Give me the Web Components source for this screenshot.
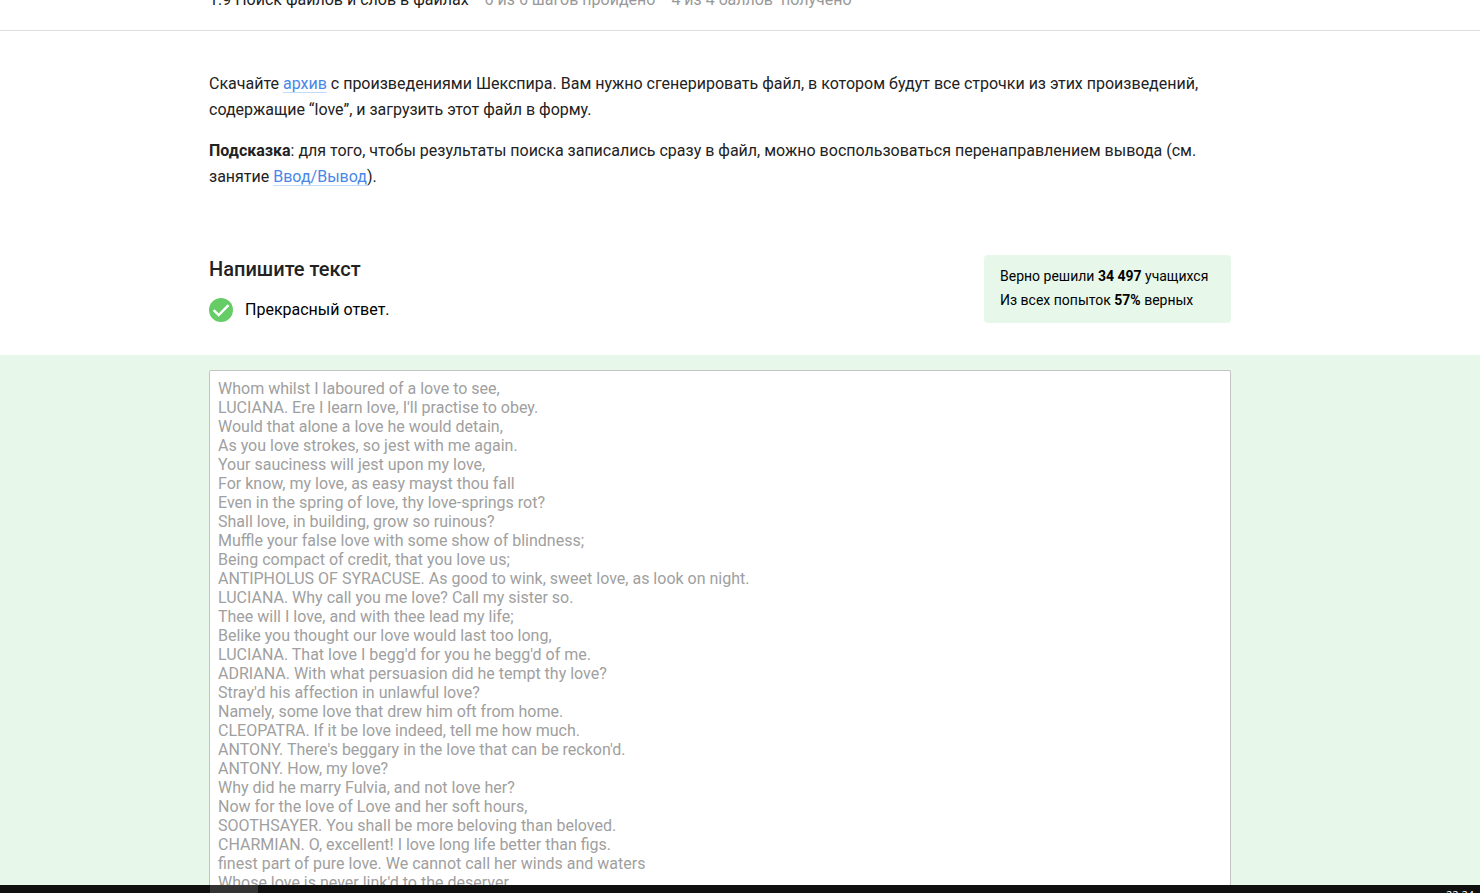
<!DOCTYPE html>
<html lang="ru">
<head>
<meta charset="utf-8">
<title>Поиск файлов и слов в файлах</title>
<style>
  html, body { margin: 0; height: 100%; }
  body { font: 16px/26px Roboto, "Noto Sans", sans-serif; color: #222; background: #fff; overflow: hidden; }
</style>
</head>
<body>
<lesson-page></lesson-page>

<template id="lesson-page">
  <style>
    :host { display: flex; flex-direction: column; height: 100vh; overflow: hidden; --gutter: 40px; --column: 1022px; --mint: #e7f8ea; }
    main { flex: 1; min-height: 0; display: flex; flex-direction: column; }
    a { color: #4a86e8; text-decoration: underline 1px #c2dcf8; text-underline-offset: 3px; text-decoration-skip-ink: none; }
    p { margin: 0; }
    .statement { display: flex; flex-direction: column; gap: 15px; padding: 40px 0 65px; }
    .summary { display: flex; justify-content: space-between; align-items: flex-start; padding-bottom: 31px; }
    h2 { margin: 0; font-size: 20px; line-height: 28px; font-weight: 500; }
    .verdict { display: flex; flex-direction: column; gap: 14px; }
  </style>
  <lesson-header>
    <span slot="title">1.9 Поиск файлов и слов в файлах</span>
    <span slot="progress">6 из 6 шагов пройдено</span>
    <span slot="progress">4 из 4 баллов&nbsp; получено</span>
  </lesson-header>
  <main>
    <page-column>
      <div class="statement">
        <p>Скачайте <a href="#archive">архив</a> с произведениями Шекспира. Вам нужно сгенерировать файл, в котором будут все строчки из этих произведений, содержащие “love”, и загрузить этот файл в форму.</p>
        <p><b>Подсказка</b>: для того, чтобы результаты поиска записались сразу в файл, можно воспользоваться перенаправлением вывода (см. занятие <a href="#io">Ввод/Вывод</a>).</p>
      </div>
      <div class="summary">
        <div class="verdict">
          <h2>Напишите текст</h2>
          <answer-status>Прекрасный ответ.</answer-status>
        </div>
        <solve-stats>
          <div>Верно решили <b>34 497</b> учащихся</div>
          <div>Из всех попыток <b>57%</b> верных</div>
        </solve-stats>
      </div>
    </page-column>
    <answer-area></answer-area>
  </main>
  <task-bar></task-bar>
</template>

<template id="page-column">
  <style>
    :host { display: block; padding-right: var(--gutter); }
    div { max-width: var(--column); margin: 0 auto; }
  </style>
  <div><slot></slot></div>
</template>

<template id="lesson-header">
  <style>
    :host { display: block; flex: none; margin-top: -31px; border-bottom: 1px solid #ddd; }
    .row { display: flex; gap: 16px; padding: 18px 0 17px; }
    ::slotted([slot=progress]) { color: #999; }
  </style>
  <page-column><div class="row"><slot name="title"></slot><slot name="progress"></slot></div></page-column>
</template>

<template id="answer-status">
  <style>
    :host { display: flex; align-items: center; gap: 12px; line-height: 26px; color: #000; }
    svg { display: block; width: 24px; height: 24px; }
  </style>
  <svg viewBox="0 0 24 24" aria-hidden="true"><circle cx="12" cy="12" r="12" fill="#66cc66"/><path d="M4.7 12.2l5 4.8L19.5 7.2" fill="none" stroke="#fff" stroke-width="2.4"/></svg>
  <span><slot></slot></span>
</template>

<template id="solve-stats">
  <style>
    :host { display: block; min-width: 215px; padding: 9px 16px 11px; border-radius: 4px; background: var(--mint); color: #000; font-size: 14px; line-height: 24px; margin-bottom: 1px; }
  </style>
  <slot></slot>
</template>

<template id="answer-area">
  <style>
    :host { flex: 1; min-height: 0; display: flex; background: var(--mint); padding: 15px var(--gutter) 0 0; }
    label { display: flex; width: 100%; max-width: var(--column); margin: 0 auto; }
    textarea { flex: 1; box-sizing: border-box; margin: 0; padding: 8px; border: 1px solid #c4c4c4; border-bottom: 0; border-radius: 2px 2px 0 0; background: #fff; color: #a0a0a0; font: 16px/19px Roboto, "Noto Sans", sans-serif; resize: none; overflow: hidden; outline: 0; }
  </style>
  <label><textarea readonly aria-label="Напишите текст">Whom whilst I laboured of a love to see,
LUCIANA. Ere I learn love, I'll practise to obey.
Would that alone a love he would detain,
As you love strokes, so jest with me again.
Your sauciness will jest upon my love,
For know, my love, as easy mayst thou fall
Even in the spring of love, thy love-springs rot?
Shall love, in building, grow so ruinous?
Muffle your false love with some show of blindness;
Being compact of credit, that you love us;
ANTIPHOLUS OF SYRACUSE. As good to wink, sweet love, as look on night.
LUCIANA. Why call you me love? Call my sister so.
Thee will I love, and with thee lead my life;
Belike you thought our love would last too long,
LUCIANA. That love I begg'd for you he begg'd of me.
ADRIANA. With what persuasion did he tempt thy love?
Stray'd his affection in unlawful love?
Namely, some love that drew him oft from home.
CLEOPATRA. If it be love indeed, tell me how much.
ANTONY. There's beggary in the love that can be reckon'd.
ANTONY. How, my love?
Why did he marry Fulvia, and not love her?
Now for the love of Love and her soft hours,
SOOTHSAYER. You shall be more beloving than beloved.
CHARMIAN. O, excellent! I love long life better than figs.
finest part of pure love. We cannot call her winds and waters
Whose love is never link'd to the deserver</textarea></label>
</template>

<template id="task-bar">
  <style>
    :host { flex: none; display: flex; justify-content: space-between; height: 8px; overflow: hidden; background: #101010; padding: 0 6px 0 210px; }
    button { width: 48px; height: 40px; padding: 0; border: 0; background: #333; }
    time { color: #fff; font: 11px/16px "Open Sans", sans-serif; padding-top: 2px; }
  </style>
  <button type="button" aria-label="Окно браузера"></button>
  <time>22:24</time>
</template>

<script>
  for (const name of ["page-column", "lesson-header", "answer-status", "solve-stats", "answer-area", "task-bar", "lesson-page"]) {
    customElements.define(name, class extends HTMLElement {
      constructor() {
        super();
        this.attachShadow({ mode: "open" }).append(document.getElementById(name).content.cloneNode(true));
      }
    });
  }
</script>
</body>
</html>
